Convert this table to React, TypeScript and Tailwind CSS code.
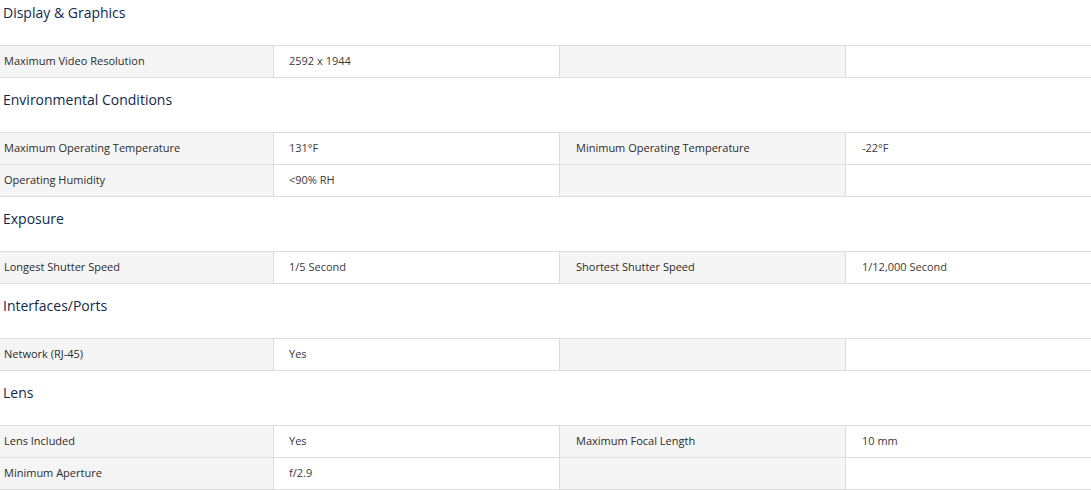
const sections: { title: string; rows: [string, string, string, string][] }[] = [
  {
    title: "Display & Graphics",
    rows: [["Maximum Video Resolution", "2592 x 1944", "", ""]],
  },
  {
    title: "Environmental Conditions",
    rows: [
      ["Maximum Operating Temperature", "131°F", "Minimum Operating Temperature", "-22°F"],
      ["Operating Humidity", "<90% RH", "", ""],
    ],
  },
  {
    title: "Exposure",
    rows: [["Longest Shutter Speed", "1/5 Second", "Shortest Shutter Speed", "1/12,000 Second"]],
  },
  {
    title: "Interfaces/Ports",
    rows: [["Network (RJ-45)", "Yes", "", ""]],
  },
  {
    title: "Lens",
    rows: [
      ["Lens Included", "Yes", "Maximum Focal Length", "10 mm"],
      ["Minimum Aperture", "f/2.9", "", ""],
    ],
  },
]

export default function App() {
  return (
    <div className="w-[1091px] h-[490px] overflow-hidden bg-white font-['Open_Sans',sans-serif]">
      <div className="-mt-[9px]">
        {sections.map((s) => (
          <div key={s.title}>
            <h3 className="h-[54px] pt-[12px] pl-[3px] text-[14px] leading-[20px] text-[#0f2a4a]">{s.title}</h3>
            <div className="border-t border-[#dcdcdc]">
              {s.rows.map((r, i) => (
                <div key={i} className="grid grid-cols-[274px_286px_286px_1fr] h-[32px] border-b border-[#dcdcdc] text-[11px] items-stretch">
                  <div className="bg-[#f5f5f5] border-r border-[#dcdcdc] pl-[4px] flex items-center text-[#2b2b2b]">{r[0]}</div>
                  <div className="border-r border-[#dcdcdc] pl-[15px] flex items-center text-[#3a3a3a]">{r[1]}</div>
                  <div className="bg-[#f5f5f5] border-r border-[#dcdcdc] pl-[16px] flex items-center text-[#2b2b2b]">{r[2]}</div>
                  <div className="pl-[16px] flex items-center text-[#3a3a3a]">{r[3]}</div>
                </div>
              ))}
            </div>
          </div>
        ))}
      </div>
    </div>
  )
}
